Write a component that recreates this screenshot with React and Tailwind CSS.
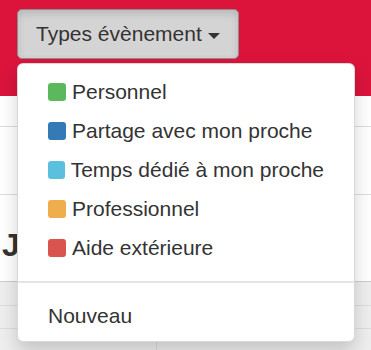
import React from "react";

const items = [
  { label: "Personnel", color: "bg-[#5cb85c]" },
  { label: "Partage avec mon proche", color: "bg-[#337ab7]" },
  { label: "Temps dédié à mon proche", color: "bg-[#5bc0de]" },
  { label: "Professionnel", color: "bg-[#f0ad4e]" },
  { label: "Aide extérieure", color: "bg-[#d9534f]" },
];

export default function App() {
  return (
    <div
      className="relative w-[371px] h-[350px] overflow-hidden bg-white text-[#333]"
      style={{ fontFamily: '"Liberation Sans", Arial, sans-serif' }}
    >
      {/* navbar */}
      <div className="relative h-[96px] bg-[#dc143c] pl-[17px] pt-[9px]">
        <button className="inline-flex items-center h-[50px] px-[18px] rounded-[5px] border border-[#8c8c8c] bg-[#d4d4d4] shadow-[inset_0_4px_7px_rgba(0,0,0,0.125)] text-[21px] leading-[30px] text-[#333]">
          <span>Types évènement</span>
          <span className="ml-[6px] mt-[3px] inline-block w-0 h-0 border-t-[6px] border-t-[#333] border-x-[6px] border-x-transparent" />
        </button>

        {/* dropdown menu */}
        <div className="absolute left-[17px] top-[63px] z-10 w-[338px] rounded-[6px] border border-[rgba(0,0,0,0.15)] bg-white pt-[8px] pb-[6px] shadow-[0_9px_18px_rgba(0,0,0,0.175)]">
          {items.map((it) => (
            <div
              key={it.label}
              className="flex items-center h-[39px] px-[30px] text-[21px] leading-[30px] text-[#333] whitespace-nowrap"
            >
              <span className={`inline-block w-[18px] h-[18px] rounded-[3px] mr-[6px] ${it.color}`} />
              <span>{it.label}</span>
            </div>
          ))}
          <div className="mt-[14px] mb-[13px] h-[2px] bg-[#e5e5e5]" />
          <div className="flex items-center h-[39px] px-[30px] text-[21px] leading-[30px] text-[#333]">
            Nouveau
          </div>
        </div>
      </div>

      {/* page body behind */}
      <div className="h-[31px] border-b border-[#ddd]" />
      <div className="h-[68px] border-b border-[#ddd]" />
      <div className="mt-[34px] pl-[2px] text-[32px] leading-[32px] font-bold text-[#333]">J</div>
      <div className="mt-[20px] border-t border-[#ccc] bg-[#eeeeee]">
        <div className="grid grid-cols-[157px_1fr] h-[24px] border-b border-[#ddd]">
          <div className="border-r border-[#ddd]" />
          <div />
        </div>
        <div className="grid grid-cols-[157px_1fr] h-[23px] border-b border-[#ddd]">
          <div className="border-r border-[#ddd]" />
          <div />
        </div>
        <div className="grid grid-cols-[157px_1fr] h-[40px]">
          <div className="border-r border-[#ddd]" />
          <div />
        </div>
      </div>
    </div>
  );
}
